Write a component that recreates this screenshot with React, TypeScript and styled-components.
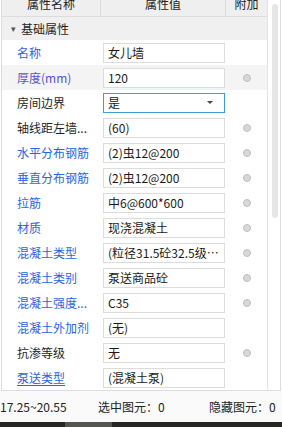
import styled, { createGlobalStyle } from 'styled-components';

const GlobalStyle = createGlobalStyle`
	html, body {
		margin: 0;
		padding: 0;
		background: #ffffff;
	}
	body {
		font-family: 'Noto Sans CJK SC', 'Noto Sans', sans-serif;
		font-size: 12px;
		color: #1f1f1f;
	}
`;

type Tone = 'blue' | 'violet' | 'black';

interface PropRow {
	name: string;
	value: string;
	tone: Tone;
	attach?: boolean;
	dropdown?: boolean;
	underline?: boolean;
	hover?: boolean;
}

const rows: PropRow[] = [
	{ name: '名称', value: '女儿墙', tone: 'blue' },
	{ name: '厚度(mm)', value: '120', tone: 'violet', attach: true, hover: true },
	{ name: '房间边界', value: '是', tone: 'black', dropdown: true },
	{ name: '轴线距左墙...', value: '(60)', tone: 'black', attach: true },
	{ name: '水平分布钢筋', value: '(2)虫12@200', tone: 'blue', attach: true },
	{ name: '垂直分布钢筋', value: '(2)虫12@200', tone: 'blue', attach: true },
	{ name: '拉筋', value: '中6@600*600', tone: 'blue', attach: true },
	{ name: '材质', value: '现浇混凝土', tone: 'blue', attach: true },
	{ name: '混凝土类型', value: '(粒径31.5砼32.5级配)', tone: 'blue', attach: true },
	{ name: '混凝土类别', value: '泵送商品砼', tone: 'blue', attach: true },
	{ name: '混凝土强度...', value: 'C35', tone: 'blue', attach: true },
	{ name: '混凝土外加剂', value: '(无)', tone: 'blue' },
	{ name: '抗渗等级', value: '无', tone: 'black', attach: true },
	{ name: '泵送类型', value: '(混凝土泵)', tone: 'blue', underline: true },
];

const toneColor: Record<Tone, string> = {
	blue: '#2a63e6',
	violet: '#5552d8',
	black: '#1f1f1f',
};

export default function App() {
	return (
		<>
			<GlobalStyle />
			<Frame>
				<Body>
					<Table>
						<Header>
							<HeaderCell>属性名称</HeaderCell>
							<HeaderCell>属性值</HeaderCell>
							<HeaderCell>附加</HeaderCell>
						</Header>
						<GroupRow>
							<Caret>▾</Caret>
							<span>基础属性</span>
						</GroupRow>
						{rows.map((row) => (
							<Row key={row.name} hover={row.hover}>
								<NameCell color={toneColor[row.tone]} underline={row.underline}>
									{row.name}
								</NameCell>
								<ValueCell>
									<ValueBox active={row.dropdown}>
										<ValueText>{row.value}</ValueText>
										{row.dropdown && <DropArrow />}
									</ValueBox>
								</ValueCell>
								<AttachCell>{row.attach && <Dot />}</AttachCell>
							</Row>
						))}
					</Table>
					<ScrollTrack>
						<ScrollThumb />
					</ScrollTrack>
				</Body>
			</Frame>
			<StatusBar>
				<span>17.25~20.55</span>
				<span>选中图元：0</span>
				<span>隐藏图元：0</span>
			</StatusBar>
			<Taskbar>
				<TaskItem />
			</Taskbar>
		</>
	);
}

const Frame = styled.div`
	width: 278px;
	margin-left: 1px;
	border-left: 1px solid #dcdcdc;
	border-right: 1px solid #dcdcdc;
	border-bottom: 1px solid #dcdcdc;
	background: #ffffff;
`;

const Body = styled.div`
	display: flex;
`;

const Table = styled.div`
	width: 265px;
	border-right: 1px solid #e4e4e4;
	display: flex;
	flex-direction: column;
`;

const Header = styled.div`
	display: grid;
	grid-template-columns: 99px 125px 41px;
	height: 16px;
	background: #efefef;
	border-bottom: 1px solid #dcdcdc;
	overflow: hidden;
`;

const HeaderCell = styled.div`
	text-align: center;
	font-size: 12px;
	line-height: 8px;
	color: #222;
	border-right: 1px solid #dcdcdc;
	&:last-child {
		border-right: none;
	}
`;

const GroupRow = styled.div`
	height: 23px;
	display: flex;
	align-items: center;
	gap: 5px;
	padding-left: 9px;
	background: #f0f0f0;
	font-size: 12px;
	color: #1f1f1f;
`;

const Caret = styled.span`
	font-size: 9px;
	color: #555;
`;

const Row = styled.div<{ hover?: boolean }>`
	display: grid;
	grid-template-columns: 99px 125px 41px;
	height: 25px;
	background: ${({ hover }) => (hover ? '#f4f4f4' : '#ffffff')};
`;

const NameCell = styled.div<{ color: string; underline?: boolean }>`
	display: flex;
	align-items: center;
	padding-left: 15px;
	font-size: 12px;
	white-space: nowrap;
	color: ${({ color }) => color};
	text-decoration: ${({ underline }) => (underline ? 'underline' : 'none')};
	text-underline-offset: 2px;
`;

const ValueCell = styled.div`
	display: flex;
	align-items: center;
	padding: 0 1px 0 2px;
`;

const ValueBox = styled.div<{ active?: boolean }>`
	flex: 1;
	min-width: 0;
	height: 18px;
	display: flex;
	align-items: center;
	padding: 0 4px;
	background: #ffffff;
	border: 1px solid ${({ active }) => (active ? '#3a9fd0' : '#dcdcdc')};
`;

const ValueText = styled.span`
	flex: 1;
	min-width: 0;
	font-size: 12px;
	color: #1a1a1a;
	white-space: nowrap;
	overflow: hidden;
	text-overflow: ellipsis;
`;

const DropArrow = styled.span`
	width: 0;
	height: 0;
	margin-right: 7px;
	border-left: 3px solid transparent;
	border-right: 3px solid transparent;
	border-top: 3px solid #444;
`;

const AttachCell = styled.div`
	display: flex;
	align-items: center;
	justify-content: center;
`;

const Dot = styled.span`
	width: 6px;
	height: 6px;
	border-radius: 50%;
	background: #d8d8d8;
	border: 1px solid #bfbfbf;
`;

const ScrollTrack = styled.div`
	width: 12px;
	padding: 4px 2px 0 4px;
	box-sizing: border-box;
`;

const ScrollThumb = styled.div`
	height: 214px;
	border-radius: 3px;
	background: #e6e6e6;
`;

const StatusBar = styled.div`
	display: grid;
	grid-template-columns: 98px 111px auto;
	align-items: center;
	height: 31px;
	background: #fafafa;
	font-size: 12px;
	color: #222;
`;

const Taskbar = styled.div`
	height: 5px;
	background: #262622;
	padding-left: 65px;
`;

const TaskItem = styled.div`
	width: 47px;
	height: 100%;
	background: #55554f;
`;
